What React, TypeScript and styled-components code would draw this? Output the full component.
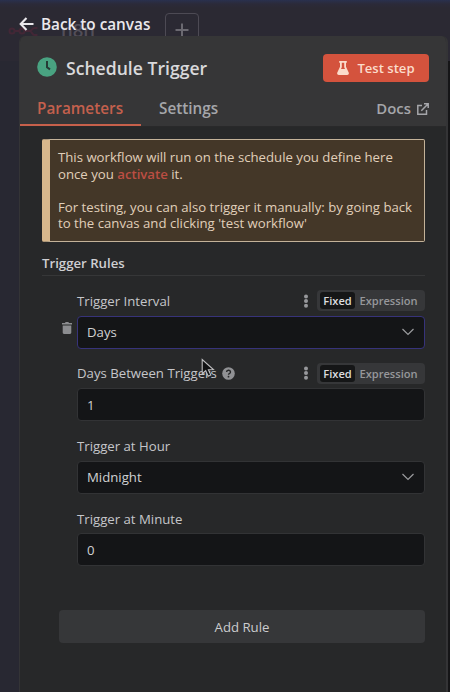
import React from 'react';
import styled, { createGlobalStyle } from 'styled-components';

const GlobalStyle = createGlobalStyle`
  *, *::before, *::after { box-sizing: border-box; }
  body { margin: 0; background: #282833; font-family: 'Open Sans', sans-serif; }
  button { font: inherit; border: 0; margin: 0; }
  p { margin: 0; }
`;

const Page = styled.div`
  position: relative;
  display: flex;
  flex-direction: column;
  width: 450px;
  height: 692px;
  overflow: hidden;
  background:
    linear-gradient(#29304e, #2b2a39 4px, transparent 8px) 0 0 / 100% 8px no-repeat,
    linear-gradient(#151517, #151517) 100% 61px / 6px 100% no-repeat,
    linear-gradient(#2b2933, #2b2933) 0 0 / 100% 61px no-repeat,
    #282832;
`;

const Backdrop = styled.div`
  position: absolute;
  inset: 0;
  color: #524e58;
`;

const GhostLogo = styled.svg`
  position: absolute;
  left: 8px;
  top: 26px;
`;

const GhostName = styled.span`
  position: absolute;
  left: 61px;
  top: 18px;
  font-size: 18.5px;
  line-height: 24px;
  font-weight: 600;
`;

const GhostAdd = styled.div`
  position: absolute;
  left: 165px;
  top: 13px;
  width: 34px;
  height: 34px;
  border: 1px solid #4d4a54;
  border-radius: 4px;
  display: grid;
  place-items: center;
`;

const BackButton = styled.button`
  position: relative;
  display: flex;
  align-items: center;
  gap: 7px;
  height: 37px;
  padding: 11px 0 0 19px;
  background: none;
  color: #eae8ec;
  font-size: 15.3px;
  font-weight: 600;
  line-height: 20px;
  svg { margin-top: -1px; }
`;

const Panel = styled.main`
  position: relative;
  flex: 1;
  display: flex;
  flex-direction: column;
  width: 429px;
  margin: -1px 0 0 19px;
  border: solid #343436;
  border-width: 0 2px 0 1px;
  border-radius: 6px 6px 0 0;
  background: #272829;
  overflow: hidden;
`;

const Header = styled.header`
  display: flex;
  flex-direction: column;
  height: 91px;
  background: #363637;
  border-bottom: 1px solid #29292a;
`;

const TitleRow = styled.div`
  display: flex;
  align-items: center;
  height: 64px;
  padding: 0 17px 0 17px;
`;

const ClockIcon = styled.svg`
  margin: -3px 9px 0 0;
`;

const Title = styled.h1`
  flex: 1;
  margin: 0;
  font-size: 17.6px;
  font-weight: 600;
  line-height: 24px;
  color: #d9d9db;
`;

const TestButton = styled.button`
  display: flex;
  align-items: center;
  justify-content: center;
  gap: 8px;
  width: 106px;
  height: 28px;
  border-radius: 4px;
  background: #d4533d;
  color: #fbdccb;
  font-size: 13.1px;
  font-weight: 600;
  padding: 0;
`;

const Tabs = styled.nav`
  display: flex;
  height: 26px;
  padding-right: 17px;
`;

const Tab = styled.span<{ $active?: boolean }>`
  width: ${p => (p.$active ? 121 : 96)}px;
  height: 26px;
  padding-left: ${p => (p.$active ? 17 : 18)}px;
  font-size: 15.3px;
  font-weight: 600;
  line-height: 16px;
  color: ${p => (p.$active ? '#c4604d' : '#a5a6aa')};
  border-bottom: ${p => (p.$active ? '2px solid #c6604b' : '0')};
`;

const DocsLink = styled.span`
  display: flex;
  align-items: center;
  gap: 6px;
  height: 15px;
  margin-left: auto;
  font-size: 14.9px;
  font-weight: 600;
  color: #a5a6aa;
  svg { margin-top: 2px; }
`;

const Body = styled.section`
  display: flex;
  flex-direction: column;
  padding: 12px 21px 0 22px;
`;

const Notice = styled.div`
  height: 103px;
  padding: 9px 0 0 8px;
  border: 1px solid #c3b299;
  border-left: 8px solid #d8b78c;
  border-radius: 2px;
  background: #443728;
  color: #e0cfba;
  font-size: 13.2px;
  line-height: 16.5px;
  white-space: nowrap;
  p + p { margin-top: 16.5px; }
  strong { color: #bb4e43; font-weight: 600; }
`;

const SectionTitle = styled.h2`
  height: 34px;
  margin: 0;
  padding-top: 12px;
  border-bottom: 1px solid #363738;
  font-size: 13.2px;
  font-weight: 600;
  line-height: 19px;
  color: #cfcfd2;
`;

const Rule = styled.div`
  display: grid;
  grid-template-columns: 35px 1fr;
  padding-top: 10px;
`;

const RemoveRule = styled.div`
  padding: 36px 0 0 20px;
  line-height: 0;
`;

const Fields = styled.div`
  display: flex;
  flex-direction: column;
  gap: 10px;
`;

const FieldBox = styled.div`
  height: 62.6px;
`;

const LabelRow = styled.div`
  display: flex;
  align-items: center;
  height: 29.5px;
`;

const Label = styled.label`
  display: flex;
  align-items: center;
  gap: 5px;
  flex: 1;
  font-size: 13.2px;
  line-height: 20px;
  color: #c5c6c9;
`;

const Toggle = styled.div`
  display: flex;
  align-items: center;
  width: 108px;
  height: 21px;
  margin-left: 8px;
  padding: 0 3px;
  border-radius: 4px;
  background: #363739;
`;

const ToggleOption = styled.span<{ $on?: boolean }>`
  flex: ${p => (p.$on ? '0 0 35px' : '1')};
  height: 17px;
  border-radius: 3px;
  background: ${p => (p.$on ? '#151617' : 'transparent')};
  color: ${p => (p.$on ? '#dddddf' : '#97979b')};
  font-size: 11.1px;
  font-weight: 600;
  line-height: 17px;
  text-align: center;
`;

const Input = styled.div<{ $focus?: boolean }>`
  display: flex;
  align-items: center;
  justify-content: space-between;
  height: 33px;
  padding: 0 10px 0 9px;
  border: 1px solid ${p => (p.$focus ? '#37337a' : '#323335')};
  border-radius: 4px;
  background: #141517;
  color: #d0d1d3;
  font-size: 13.2px;
`;

const AddButton = styled.button`
  height: 33px;
  margin: 44px 0 0 17px;
  border-radius: 4px;
  background: #363739;
  color: #cbccce;
  font-size: 13.2px;
`;

const Cursor = styled.svg`
  position: absolute;
  left: 201px;
  top: 358px;
`;

const Chevron = () => (
  <svg width="12" height="8" viewBox="0 0 12 8" fill="none" stroke="#9a9b9e" strokeWidth="1.2">
    <path d="M.5 1 6 6.5 11.5 1" />
  </svg>
);

const Dots = () => (
  <svg width="6" height="14" viewBox="0 0 6 14" fill="#97989b">
    <circle cx="3" cy="2.4" r="2" />
    <circle cx="3" cy="7.1" r="2" />
    <circle cx="3" cy="11.8" r="2" />
  </svg>
);

const Help = () => (
  <svg width="13" height="13" viewBox="0 0 13 13">
    <circle cx="6.5" cy="6.5" r="6.3" fill="#909194" />
    <path d="M4.6 5a1.95 1.75 0 1 1 2.7 1.6c-.6.3-.8.5-.8 1.1" fill="none" stroke="#272829" strokeWidth="1.4" />
    <circle cx="6.5" cy="9.7" r=".9" fill="#272829" />
  </svg>
);

type FieldProps = {
  label: string;
  value: string;
  select?: boolean;
  focus?: boolean;
  help?: boolean;
  modes?: boolean;
};

const Field = ({ label, value, select, focus, help, modes }: FieldProps) => (
  <FieldBox>
    <LabelRow>
      <Label>{label}{help && <Help />}</Label>
      {modes && (
        <>
          <Dots />
          <Toggle>
            <ToggleOption $on>Fixed</ToggleOption>
            <ToggleOption>Expression</ToggleOption>
          </Toggle>
        </>
      )}
    </LabelRow>
    <Input $focus={focus}>
      <span>{value}</span>
      {select && <Chevron />}
    </Input>
  </FieldBox>
);

export default function App() {
  return (
    <Page>
      <GlobalStyle />
      <Backdrop>
        <GhostLogo width="34" height="10" viewBox="0 0 34 10" fill="none" stroke="#432736" strokeWidth="2">
          <circle cx="4" cy="5" r="2.5" />
          <circle cx="14" cy="5" r="2.5" />
          <path d="M6.5 5h5M16.5 5h5c3 0 2-3 5-3h3M21.5 5c3 0 2 4 5 4h3" />
        </GhostLogo>
        <GhostName>n8n</GhostName>
        <GhostAdd>
          <svg width="14" height="14" viewBox="0 0 14 14" stroke="#6b6971" strokeWidth="2">
            <path d="M7 .5v13M.5 7h13" />
          </svg>
        </GhostAdd>
      </Backdrop>
      <BackButton>
        <svg width="15" height="14" viewBox="0 0 15 14" fill="none" stroke="currentColor" strokeWidth="2.1">
          <path d="M7.5 1 1.7 7l5.8 6M2 7h12.5" />
        </svg>
        <span>Back to canvas</span>
      </BackButton>
      <Panel>
        <Header>
          <TitleRow>
            <ClockIcon width="20" height="20" viewBox="0 0 20 20">
              <circle cx="10" cy="10" r="9.8" fill="#49a381" />
              <path d="M10 4v6.2l3 2.2" fill="none" stroke="#263b35" strokeWidth="2" />
            </ClockIcon>
            <Title>Schedule Trigger</Title>
            <TestButton>
              <svg width="12" height="14" viewBox="0 0 12 14" fill="currentColor">
                <path fillRule="evenodd" d="M2.2 0h7.6v1.7H9v4.1l2.7 5.7c.5 1.2-.2 2.5-1.5 2.5H1.8C.5 14-.2 12.7.3 11.5L3 5.8V1.7h-.8ZM4.8 1.7v4.5L4 7.9h4L7.2 6.2V1.7Z" />
              </svg>
              <span>Test step</span>
            </TestButton>
          </TitleRow>
          <Tabs>
            <Tab $active>Parameters</Tab>
            <Tab>Settings</Tab>
            <DocsLink>
              Docs
              <svg width="12" height="12" viewBox="0 0 12 12" fill="none" stroke="currentColor" strokeWidth="1.5">
                <path d="M5 2.5H.8v8.7h8.7V7M7 .8h4.2V5M11 1 4.3 7.7" />
              </svg>
            </DocsLink>
          </Tabs>
        </Header>
        <Body>
          <Notice>
            <p>This workflow will run on the schedule you define here<br />once you <strong>activate</strong> it.</p>
            <p>For testing, you can also trigger it manually: by going back<br />to the canvas and clicking 'test workflow'</p>
          </Notice>
          <SectionTitle>Trigger Rules</SectionTitle>
          <Rule>
            <RemoveRule>
              <svg width="10" height="12" viewBox="0 0 10 12" fill="#8c8d90">
                <path d="M0 1h3l.6-1h2.8L7 1h3v1.6H0ZM.7 3.4h8.6v7.2c0 .8-.5 1.4-1.3 1.4H2c-.8 0-1.3-.6-1.3-1.4Z" />
              </svg>
            </RemoveRule>
            <Fields>
              <Field label="Trigger Interval" value="Days" select focus modes />
              <Field label="Days Between Triggers" value="1" help modes />
              <Field label="Trigger at Hour" value="Midnight" select />
              <Field label="Trigger at Minute" value="0" />
            </Fields>
          </Rule>
          <AddButton>Add Rule</AddButton>
        </Body>
      </Panel>
      <Cursor width="15" height="20" viewBox="0 0 15 20">
        <path d="M1.2 1.5v14.2l3.5-3 2.5 5.5 2.6-1.2-2.4-5.2 5-.2Z" fill="#111213" stroke="#bdbdbf" strokeWidth="1.1" />
      </Cursor>
    </Page>
  );
}
